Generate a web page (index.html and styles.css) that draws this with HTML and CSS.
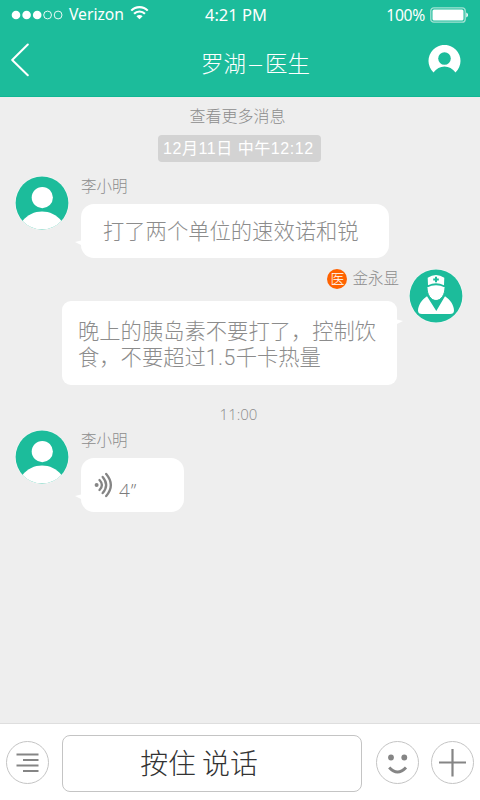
FILE: index.html
```
<!DOCTYPE html>
<html lang="zh-CN">
<head>
<meta charset="utf-8">
<title>罗湖–医生</title>
<link rel="stylesheet" href="styles.css">
</head>
<body>
<svg width="0" height="0" class="defs">
  <defs>
    <symbol id="patient" viewBox="0 0 54 54">
      <circle cx="27" cy="27" r="27" fill="#f8f8f8"/>
      <circle cx="27" cy="27" r="26.4" fill="#1cbc9b"/>
      <circle cx="27.3" cy="21.6" r="10.6" fill="#fff"/>
      <path d="M7.5 45C17 32.200 37 32.200 46.500 45A27 27 0 0 1 7.500 45Z" fill="#fff"/>
    </symbol>
  </defs>
</svg>
<div class="phone">
  <header class="header">
    <div class="status">
      <div class="carrier">
        <svg width="52" height="12" viewBox="0 0 52 12" fill="#fff">
          <circle cx="5" cy="6" r="4.300"/><circle cx="15.600" cy="6" r="4.300"/><circle cx="26.200" cy="6" r="4.300"/>
          <g fill="none" stroke="#fff" stroke-width=".9"><circle cx="36.600" cy="6" r="3.900"/><circle cx="47.100" cy="6" r="3.900"/></g>
        </svg>
        <span class="carrier-name">Verizon</span>
        <svg class="wifi" width="19" height="15" viewBox="0 0 20 16" fill="none" stroke="#fff" stroke-width="2.300">
          <path d="M1.200 6A12.200 12.200 0 0 1 18.800 6"/>
          <path d="M4.200 9.400A8 8 0 0 1 15.800 9.400"/>
          <path d="M10 15.300L6.700 12A4.700 4.700 0 0 1 13.300 12Z" fill="#fff" stroke="none"/>
        </svg>
      </div>
      <div class="clock">4:21 PM</div>
      <div class="power">
        <span>100%</span>
        <svg width="38" height="16" viewBox="0 0 38 16">
          <rect x=".8" y=".8" width="34.400" height="14.400" rx="3" fill="#1cbc9b" stroke="#a3e2d4" stroke-width="1.300"/>
          <rect x="2.500" y="2.500" width="31" height="11" rx="1.500" fill="#fff"/>
          <path d="M36.300 5.500Q38 6.200 38 8T36.300 10.500Z" fill="#fff"/>
        </svg>
      </div>
    </div>
    <div class="titlebar">
      <svg class="back" width="18" height="34" viewBox="0 0 18 34" fill="none" stroke="#fff" stroke-width="2" stroke-linecap="round" stroke-linejoin="round"><path d="M16.800 1.500L1.200 17L16.800 32.300"/></svg>
      <h1 class="title">罗湖<span class="dash">–</span>医生</h1>
      <svg class="profile" width="33" height="28" viewBox="0 0 33 28">
        <path d="M5.500 27.500A16 16 0 1 1 27.500 27.500C22 19.500 11 19.500 5.500 27.500Z" fill="#fff"/>
        <circle cx="16.500" cy="13.500" r="6.300" fill="#1cbc9b"/>
      </svg>
    </div>
  </header>

  <main class="chat">
    <div class="more">查看更多消息</div>
    <div class="date">12月11日 中午12:12</div>

    <section class="message first">
      <svg class="avatar" width="54" height="54"><use href="#patient"/></svg>
      <div class="content">
        <div class="name">李小明</div>
        <div class="bubble wide">打了两个单位的速效诺和锐</div>
      </div>
    </section>

    <section class="message own">
      <div class="content">
        <div class="name"><span class="badge">医</span>金永显</div>
        <div class="bubble long">晚上的胰岛素不要打了，控制饮<br>食，不要超过<span class="num">1.5</span>千卡热量</div>
      </div>
      <svg class="avatar" width="54" height="54" viewBox="0 0 54 54">
        <circle cx="27" cy="27" r="27" fill="#f8f8f8"/>
        <circle cx="27" cy="27" r="26.400" fill="#1cbc9b"/>
        <g fill="#fff">
          <path d="M19 16.200L18.700 8.800Q27 3.300 35.300 8.800L35 16.200Q27 12.200 19 16.200Z"/>
          <path d="M18 18.600Q27 13.800 36 18.600C36 25 32.500 31.500 27 31.500S18 25 18 18.600Z"/>
          <path d="M18 27.300L27.300 42L36 27.300C41.500 31 45 36.500 45 41.500Q45 45 41 45H13Q9 45 9 41.500C9.200 36.500 12.500 31 18 27.300Z"/>
        </g>
        <path d="M18 18.600C18 25 21.500 31.500 27 31.500S36 25 36 18.600" fill="none" stroke="#1cbc9b" stroke-width="1"/>
        <path d="M27 7.700V13.300M24.200 10.500H29.800" stroke="#1cbc9b" stroke-width="2"/>
      </svg>
    </section>

    <div class="time">11:00</div>

    <section class="message last">
      <svg class="avatar" width="54" height="54"><use href="#patient"/></svg>
      <div class="content">
        <div class="name">李小明</div>
        <div class="bubble voice">
          <svg width="20" height="26" viewBox="0 0 20 26" fill="none" stroke="#858585" stroke-width="2.300" stroke-linecap="round">
            <circle cx="2.600" cy="13" r="2" fill="#858585" stroke="none"/>
            <path d="M5.500 8Q10.300 13 5.500 18M8.700 4.900Q15.600 13 8.700 21.100M12.200 2Q21.500 13 12.200 24"/>
          </svg>
          <span class="length">4<span class="sec">’’</span></span>
        </div>
      </div>
    </section>
  </main>

  <footer class="composer">
    <svg class="tool" width="43" height="43" viewBox="0 0 43 43" fill="none">
      <circle cx="21.500" cy="21.500" r="21" stroke="#c4c4c4"/>
      <path d="M10.500 13.500H32.500M17 19H32.500M10.500 24.500H32.500M17 30H32.500" stroke="#858585" stroke-width="1.900"/>
    </svg>
    <button class="talk">按住 说话</button>
    <svg class="tool" width="43" height="43" viewBox="0 0 43 43" fill="none">
      <circle cx="21.500" cy="21.500" r="21" stroke="#c4c4c4"/>
      <g fill="#858585"><circle cx="15" cy="16.500" r="2.900"/><circle cx="28.300" cy="16.500" r="2.900"/></g>
      <path d="M13.200 26.500Q21.500 35.500 30 26.500" stroke="#858585" stroke-width="3"/>
    </svg>
    <svg class="tool plus" width="43" height="43" viewBox="0 0 43 43" fill="none">
      <circle cx="21.500" cy="21.500" r="21" stroke="#c4c4c4"/>
      <path d="M21.500 8V35.500M8 21.500H35" stroke="#858585" stroke-width="2.200"/>
    </svg>
  </footer>
</div>
</body>
</html>
```

FILE: styles.css
```
* { box-sizing: border-box; }
body { margin: 0; }
.defs { display: block; height: 0; }
svg { display: block; flex: none; }
.phone {
  width: 480px;
  height: 800px;
  display: flex;
  flex-direction: column;
  background: #eee;
  font-family: "Noto Sans CJK SC", sans-serif;
  font-weight: 300;
  color: #8c8c8c;
  overflow: hidden;
}
.header { flex: none; height: 97px; background: #1cbc9b; color: #fff; border-bottom: 1px solid #10b794; }
.status {
  height: 30px;
  display: grid;
  grid-template-columns: 194px auto 1fr;
  align-items: center;
  padding: 0 12px 0 11px;
  font: 400 16px/30px "Noto Sans", sans-serif;
}
.carrier, .power { display: flex; align-items: center; }
.carrier-name { margin: -2px 0 0 6px; font-size: 15.700px; }
.wifi { margin: -5px 0 0 6px; }
.clock { font-size: 16.500px; }
.power { justify-content: flex-end; gap: 5px; font-size: 15.700px; letter-spacing: -.3px; }
.titlebar { height: 66px; display: grid; grid-template-columns: 60px 1fr 60px; align-items: center; padding: 0 19px 0 11px; }
.back { margin-top: -6px; }
.title { margin: -3px 0 0; text-align: center; padding-left: 39px; font-size: 22.500px; line-height: 32px; font-weight: 300; white-space: nowrap; }
.dash { display: inline-block; transform: scaleX(1.3); padding: 0 3.500px; }
.profile { justify-self: end; margin-top: -8px; }
.chat { flex: 1; display: flex; flex-direction: column; }
.more { align-self: center; margin: 6px 5px 0 0; font-size: 16px; line-height: 24px; }
.date {
  align-self: center;
  margin: 8px 1px 0 0;
  width: 163px;
  height: 27px;
  border-radius: 4px;
  background: #d3d3d3;
  color: #fff;
  font: 400 16px/27px "Liberation Sans", "Noto Sans CJK SC", sans-serif;
  padding-left: 5px;
  white-space: nowrap;
  letter-spacing: .55px;
}
.message { display: flex; gap: 12px; padding-left: 15px; }
.avatar { margin-top: -1px; }
.first { margin-top: 15px; }
.name { font-size: 15.500px; line-height: 17px; height: 27px; }
.bubble { position: relative; background: #fff; border-radius: 13px; font-size: 21.300px; line-height: 26px; white-space: nowrap; }
.bubble::before {
  content: "";
  position: absolute;
  left: -6px;
  top: 36px;
  border: solid transparent;
  border-width: 2px 8px 4px 0;
  border-right-color: #fff;
}
.wide { width: 308px; height: 54px; padding: 13px 0 0 22px; }
.own { justify-content: flex-end; gap: 13px; margin-top: 11px; padding: 0 17px 0 0; }
.own .avatar { margin-top: 0; }
.own .name { display: flex; justify-content: flex-end; height: 32px; align-items: flex-start; margin-right: -3px; }
.own .bubble { left: 1px; }
.badge { width: 20px; height: 20px; border-radius: 50%; background: #ff6200; color: #fff; font-size: 14px; line-height: 19px; text-align: center; margin-right: 5px; }
.long { width: 335px; height: 84px; border-radius: 9px; padding: 16px 0 0 16px; }
.long::before { left: auto; right: -6px; top: 18px; border-width: 2px 0 4px 8px; border-left-color: #fff; }
.num { font: 300 21.300px/20px Roboto, "Liberation Sans", sans-serif; letter-spacing: .4px; }
.time { align-self: center; margin-top: 18px; padding-right: 3px; font: 300 15px/22px "Open Sans", sans-serif; color: #8c8c8c; }
.last { margin-top: 6px; }
.voice { width: 103px; height: 54px; display: flex; padding: 14px 0 0 13px; }
.length { margin: 5px 0 0 5px; font: 300 19px/26px "Open Sans", sans-serif; color: #7c7c7c; }
.sec { margin-left: 1px; }
.composer { flex: none; height: 77px; display: flex; align-items: center; padding: 0 6px; border-top: 1px solid #dedede; background: #fff; }
.talk {
  width: 300px;
  height: 57px;
  margin: 2px 14px 0 13px;
  border: 1px solid #c4c4c4;
  border-radius: 8px;
  background: #fff;
  color: #333;
  font: 300 27.900px/53px "Noto Sans CJK SC", sans-serif;
  padding: 0 26px 2px 0;
}
.plus { margin-left: 12px; }
```
